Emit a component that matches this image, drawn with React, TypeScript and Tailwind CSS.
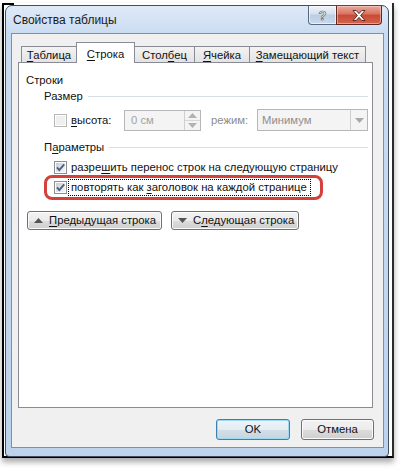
import type { ReactNode } from 'react'

const U = ({ children }: { children: ReactNode }) => (
    <span className="underline decoration-1 underline-offset-[2px]">{children}</span>
)

const CheckBox = ({ checked = false, disabled = false }: { checked?: boolean; disabled?: boolean }) => (
    <svg width="13" height="13" viewBox="0 0 13 13" className="shrink-0">
        <defs>
            <linearGradient id="cbfill" x1="0" y1="0" x2="1" y2="1">
                <stop offset="0" stopColor="#c9cdd3" />
                <stop offset="1" stopColor="#f7f7f7" />
            </linearGradient>
        </defs>
        <rect x="0.5" y="0.5" width="12" height="12" fill="#fdfdfd" stroke={disabled ? '#b7b7b7' : '#8e8f8f'} />
        <rect x="2" y="2" width="9" height="9" fill={disabled ? '#efefef' : 'url(#cbfill)'} />
        {checked && <path d="M3 6.4l2.3 2.7L10.2 3.4" fill="none" stroke="#4a5e86" strokeWidth="1.9" />}
    </svg>
)

const Tri = ({ down = false, color = '#444' }: { down?: boolean; color?: string }) => (
    <svg width="9" height="5" viewBox="0 0 9 5" className="shrink-0">
        <path d={down ? 'M0 0h9L4.5 5z' : 'M0 5h9L4.5 0z'} fill={color} />
    </svg>
)

const btn =
    'flex items-center border border-[#707070] rounded-[3px] bg-[linear-gradient(180deg,#f3f3f3_0%,#ebebeb_50%,#dddddd_51%,#cfcfcf_100%)] shadow-[inset_0_0_0_1px_#fbfbfb]'

const tab =
    '-ml-px h-[16px] border border-b-0 border-[#898c95] bg-[linear-gradient(180deg,#f3f3f3,#e3e3e3)] flex items-center justify-center leading-[14px]'

const GroupHeader = ({ children }: { children: ReactNode }) => (
    <div className="flex items-center h-[16px] ml-[25px] mr-[4px]">
        <span className="leading-[16px]">{children}</span>
        <div className="flex-1 h-px bg-[#d5dfe5] ml-[5px]" />
    </div>
)

export default function App() {
    return (
        <div className="w-[404px] h-[468px] bg-white overflow-hidden whitespace-nowrap text-[11.3px] text-[#111] font-['Liberation_Sans','Noto_Sans',sans-serif] pl-[2px] pt-[3px]">
            <div className="relative w-[392px] h-[455px] border-l-2 border-b-2 border-r-2 border-black border-r-[#2a2a2a] shadow-[0_4px_6px_rgba(0,0,0,0.35)] pl-px pt-[2px]">
                <div className="absolute -left-[2px] top-0 w-[12px] h-[2px] bg-black" />

                {/* Window frame */}
                <div className="w-[384px] h-[452px] border border-[#3e4f63] rounded-t-[7px] rounded-b-[4px] bg-[linear-gradient(180deg,#dfeaf7_0px,#cadcf1_28px,#bdd3ec_100%)] flex flex-col">
                    {/* Title bar */}
                    <div className="h-[27px] flex items-start pl-[7px] pr-[6px] shrink-0">
                        <span className="mt-[6px] leading-[16px] text-[12px] text-[#1b1b1b]">Свойства таблицы</span>
                        <div className="ml-auto flex">
                            <div className="w-[29px] h-[19px] border border-[#56697f] border-t-0 rounded-bl-[4px] bg-[linear-gradient(180deg,#eef3fa_0%,#d4e0ef_45%,#bccde3_50%,#c9daee_100%)] flex items-center justify-center shadow-[inset_0_0_0_1px_rgba(255,255,255,0.6)]">
                                <span className="text-[13px] font-bold leading-none text-white [-webkit-text-stroke:0.6px_#4a5668]">?</span>
                            </div>
                            <div className="w-[46px] h-[19px] -ml-px border border-[#5e2722] border-t-0 rounded-br-[4px] bg-[linear-gradient(180deg,#e9a99c_0%,#d9735f_45%,#c74a36_50%,#d6624b_100%)] flex items-center justify-center shadow-[inset_0_0_0_1px_rgba(255,220,210,0.5)]">
                                <svg width="14" height="11" viewBox="0 0 14 11">
                                    <path
                                        d="M1 0.5h3.2L7 3.6 9.8 0.5H13L8.6 5.5 13 10.5H9.8L7 7.4 4.2 10.5H1L5.4 5.5z"
                                        fill="#fff"
                                        stroke="#4b2420"
                                        strokeWidth="0.9"
                                        strokeLinejoin="round"
                                    />
                                </svg>
                            </div>
                        </div>
                    </div>

                    {/* Client area */}
                    <div className="ml-[5px] w-[373px] h-[415px] border border-[#7f90a6] bg-[#f0f0f0] pt-[8px] pl-[6px] flex flex-col">
                        {/* Tabs */}
                        <div className="flex items-end h-[20px] pl-[4px]">
                            <div className={`${tab} w-[56px]`}>
                                <span><U>Т</U>аблица</span>
                            </div>
                            <div className="relative z-10 -ml-px w-[59px] h-[21px] -mb-px border border-b-0 border-[#898c95] bg-white flex items-start justify-center pt-[3px] leading-[16px]">
                                <span><U>С</U>трока</span>
                            </div>
                            <div className={`${tab} w-[61px]`}>
                                <span>Стол<U>б</U>ец</span>
                            </div>
                            <div className={`${tab} w-[56px]`}>
                                <span><U>Я</U>чейка</span>
                            </div>
                            <div className={`${tab} w-[117px]`}>
                                <span><U>З</U>амещающий текст</span>
                            </div>
                        </div>

                        {/* Tab panel */}
                        <div className="w-[355px] h-[346px] border border-[#898c95] bg-white flex flex-col">
                            <div className="mt-[9px] ml-[7px] leading-[16px]">Строки</div>
                            <GroupHeader>Размер</GroupHeader>

                            <div className="mt-[5px] h-[22px] flex items-center ml-[35px]">
                                <CheckBox disabled />
                                <span className="ml-[4px] w-[53px]"><U>в</U>ысота:</span>
                                <div className="flex h-[21px] border border-[#b5b8bb] bg-[#f4f4f4]">
                                    <div className="w-[59px] flex items-center pl-[6px] text-[#a3a3a3]">0 см</div>
                                    <div className="w-[16px] flex flex-col border-l border-[#d0d0d0]">
                                        <div className="flex-1 flex items-center justify-center border-b border-[#d7d7d7]">
                                            <Tri color="#b2b2b2" />
                                        </div>
                                        <div className="flex-1 flex items-center justify-center">
                                            <Tri down color="#b2b2b2" />
                                        </div>
                                    </div>
                                </div>
                                <span className="ml-[10px] w-[46px] text-[#8d8d8d]">режим:</span>
                                <div className="w-[111px] h-[22px] border border-[#b5b8bb] bg-[#f4f4f4] flex">
                                    <div className="flex-1 flex items-center pl-[4px] text-[#8f8f8f]">Минимум</div>
                                    <div className="w-[17px] border-l border-[#d0d0d0] flex items-center justify-center">
                                        <Tri down color="#a8a8a8" />
                                    </div>
                                </div>
                            </div>

                            <div className="mt-[8px]">
                                <GroupHeader>
                                    П<U>а</U>раметры
                                </GroupHeader>
                            </div>

                            <div className="mt-[4px] h-[16px] flex items-center ml-[35px]">
                                <CheckBox checked />
                                <span className="ml-[4px] leading-[16px]">разре<U>ш</U>ить перенос строк на следующую страницу</span>
                            </div>

                            <div className="ml-[25px] w-[279px] h-[25px] border-[3px] border-[#d4403a] rounded-[8px] flex items-center pl-[7px]">
                                <CheckBox checked />
                                <span className="ml-px h-[17px] border border-dotted border-black pl-[2px] pr-[3px] leading-[15px]">
                                    повторять как <U>з</U>аголовок на каждой странице
                                </span>
                            </div>

                            <div className="mt-[11px] ml-[8px] flex">
                                <div className={`${btn} w-[135px] h-[19px] pl-[6px]`}>
                                    <Tri color="#555" />
                                    <span className="ml-[6px] leading-[15px]"><U>П</U>редыдущая строка</span>
                                </div>
                                <div className={`${btn} ml-[9px] w-[128px] h-[19px] pl-[6px]`}>
                                    <Tri down color="#555" />
                                    <span className="ml-[6px] leading-[15px]">С<U>л</U>едующая строка</span>
                                </div>
                            </div>
                        </div>

                        {/* Dialog buttons */}
                        <div className="mt-[11px] w-[356px] flex justify-end">
                            <div className="w-[74px] h-[21px] flex items-center justify-center border border-[#3c7fb1] rounded-[3px] bg-[linear-gradient(180deg,#eef4f8_0%,#e5edf2_50%,#d3dfe7_51%,#c6d5de_100%)] shadow-[inset_0_0_0_1px_#9fd8f3]">
                                OK
                            </div>
                            <div className={`${btn} ml-[11px] w-[73px] h-[21px] justify-center`}>Отмена</div>
                        </div>
                    </div>
                </div>
            </div>
        </div>
    )
}
